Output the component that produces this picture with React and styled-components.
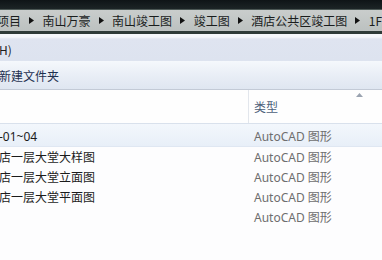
import React from 'react';
import styled, { createGlobalStyle } from 'styled-components';

const GlobalStyle = createGlobalStyle`
  html, body {
    margin: 0;
    padding: 0;
    background: #fdfdfe;
    overflow: hidden;
  }
  body {
    font-family: "Noto Sans", "Noto Sans CJK SC", sans-serif;
    font-size: 12px;
  }
`;

const crumbs = ['项目', '南山万豪', '南山竣工图', '竣工图', '酒店公共区竣工图', '1F'];

const files = [
  { name: '-01~04', type: 'AutoCAD 图形', selected: true },
  { name: '店一层大堂大样图', type: 'AutoCAD 图形' },
  { name: '店一层大堂立面图', type: 'AutoCAD 图形' },
  { name: '店一层大堂平面图', type: 'AutoCAD 图形' },
  { name: '', type: 'AutoCAD 图形' },
];

const Window = styled.div`
  width: 382px;
  height: 260px;
  display: flex;
  flex-direction: column;
  overflow: hidden;
  background: #fdfdfe;
`;

const TitleFrame = styled.div`
  height: 9px;
  background: linear-gradient(#0f1417, #1c2426);
  flex-shrink: 0;
`;

const AddressBar = styled.div`
  height: 21px;
  display: flex;
  align-items: center;
  background: linear-gradient(#c9cdcc, #bcc1c0);
  border-top: 1px solid #4b5654;
  border-bottom: 3px solid #2e3a37;
  white-space: nowrap;
  overflow: hidden;
  flex-shrink: 0;
`;

const Crumb = styled.span`
  font-family: "Noto Sans CJK SC", sans-serif;
  font-size: 12px;
  color: #1a1d1d;
  margin-left: ${({ $first }) => ($first ? '-3px' : '0')};
`;

const Arrow = styled.span`
  display: inline-flex;
  width: 28px;
  justify-content: center;
  align-items: center;
`;

const MenuBar = styled.div`
  height: 27px;
  display: flex;
  align-items: center;
  padding-top: 4px;
  box-sizing: border-box;
  background: linear-gradient(#f4f6fa 0, #f4f6fa 3px, #dfe4f0 5px, #dde3ef 100%);
  flex-shrink: 0;
`;

const MenuItem = styled.span`
  font-family: "Noto Sans CJK SC", sans-serif;
  font-size: 12px;
  color: #1e1e1e;
  margin-left: -1px;
`;

const Toolbar = styled.div`
  height: 28px;
  display: flex;
  align-items: center;
  background: linear-gradient(#f5f8fc, #e9eef6 50%, #dfe6f1);
  border-bottom: 1px solid #c3cad6;
  flex-shrink: 0;
`;

const ToolButton = styled.span`
  font-family: "Noto Sans CJK SC", sans-serif;
  font-size: 12px;
  color: #1e3050;
  margin-left: -1px;
`;

const Header = styled.div`
  height: 33px;
  display: grid;
  grid-template-columns: 248px 1fr;
  border-bottom: 1px solid #d9e1ec;
  background: #fefefe;
  flex-shrink: 0;
`;

const HeaderCell = styled.div`
  position: relative;
  display: flex;
  align-items: center;
  padding-left: 5px;
  font-family: "Noto Sans CJK SC", sans-serif;
  font-size: 12px;
  color: #4c607a;
  border-left: ${({ $divider }) => ($divider ? '1px solid #e2e6ec' : 'none')};
`;

const SortMark = styled.svg`
  position: absolute;
  top: 3px;
  right: 19px;
`;

const List = styled.div`
  display: flex;
  flex-direction: column;
`;

const Row = styled.div`
  height: 20px;
  display: grid;
  grid-template-columns: 254px 1fr;
  align-items: center;
  padding-top: ${({ $selected }) => ($selected ? '2px' : '0')};
  background: ${({ $selected }) => ($selected ? 'linear-gradient(#f3f7fc, #e8eff8)' : 'transparent')};
  border-bottom: ${({ $selected }) => ($selected ? '1px solid #dfe7f2' : 'none')};
`;

const NameCell = styled.span`
  font-family: "Noto Sans", "Noto Sans CJK SC", sans-serif;
  font-size: 12px;
  color: #1b1b1b;
  white-space: nowrap;
  margin-left: -1px;
`;

const TypeCell = styled.span`
  font-family: "Noto Sans", "Noto Sans CJK SC", sans-serif;
  font-size: 12px;
  color: #6e6e6e;
  white-space: nowrap;
`;

const ArrowIcon = () => (
  <svg width="5" height="7" viewBox="0 0 5 7">
    <path d="M0 0 L5 3.5 L0 7 Z" fill="#111" />
  </svg>
);

export default function App() {
  return (
    <>
      <GlobalStyle />
      <Window>
        <TitleFrame />
        <AddressBar>
          {crumbs.map((c, i) => (
            <React.Fragment key={c}>
              <Crumb $first={i === 0}>{c}</Crumb>
              {i < crumbs.length - 1 && (
                <Arrow>
                  <ArrowIcon />
                </Arrow>
              )}
            </React.Fragment>
          ))}
        </AddressBar>
        <MenuBar>
          <MenuItem>H)</MenuItem>
        </MenuBar>
        <Toolbar>
          <ToolButton>新建文件夹</ToolButton>
        </Toolbar>
        <Header>
          <HeaderCell />
          <HeaderCell $divider>
            类型
            <SortMark width="7" height="4" viewBox="0 0 7 4">
              <path d="M0 4 L3.5 0 L7 4 Z" fill="#9aa3b0" />
            </SortMark>
          </HeaderCell>
        </Header>
        <List>
          {files.map((f, i) => (
            <Row key={i} $selected={f.selected}>
              <NameCell>{f.name}</NameCell>
              <TypeCell>{f.type}</TypeCell>
            </Row>
          ))}
        </List>
      </Window>
    </>
  );
}
